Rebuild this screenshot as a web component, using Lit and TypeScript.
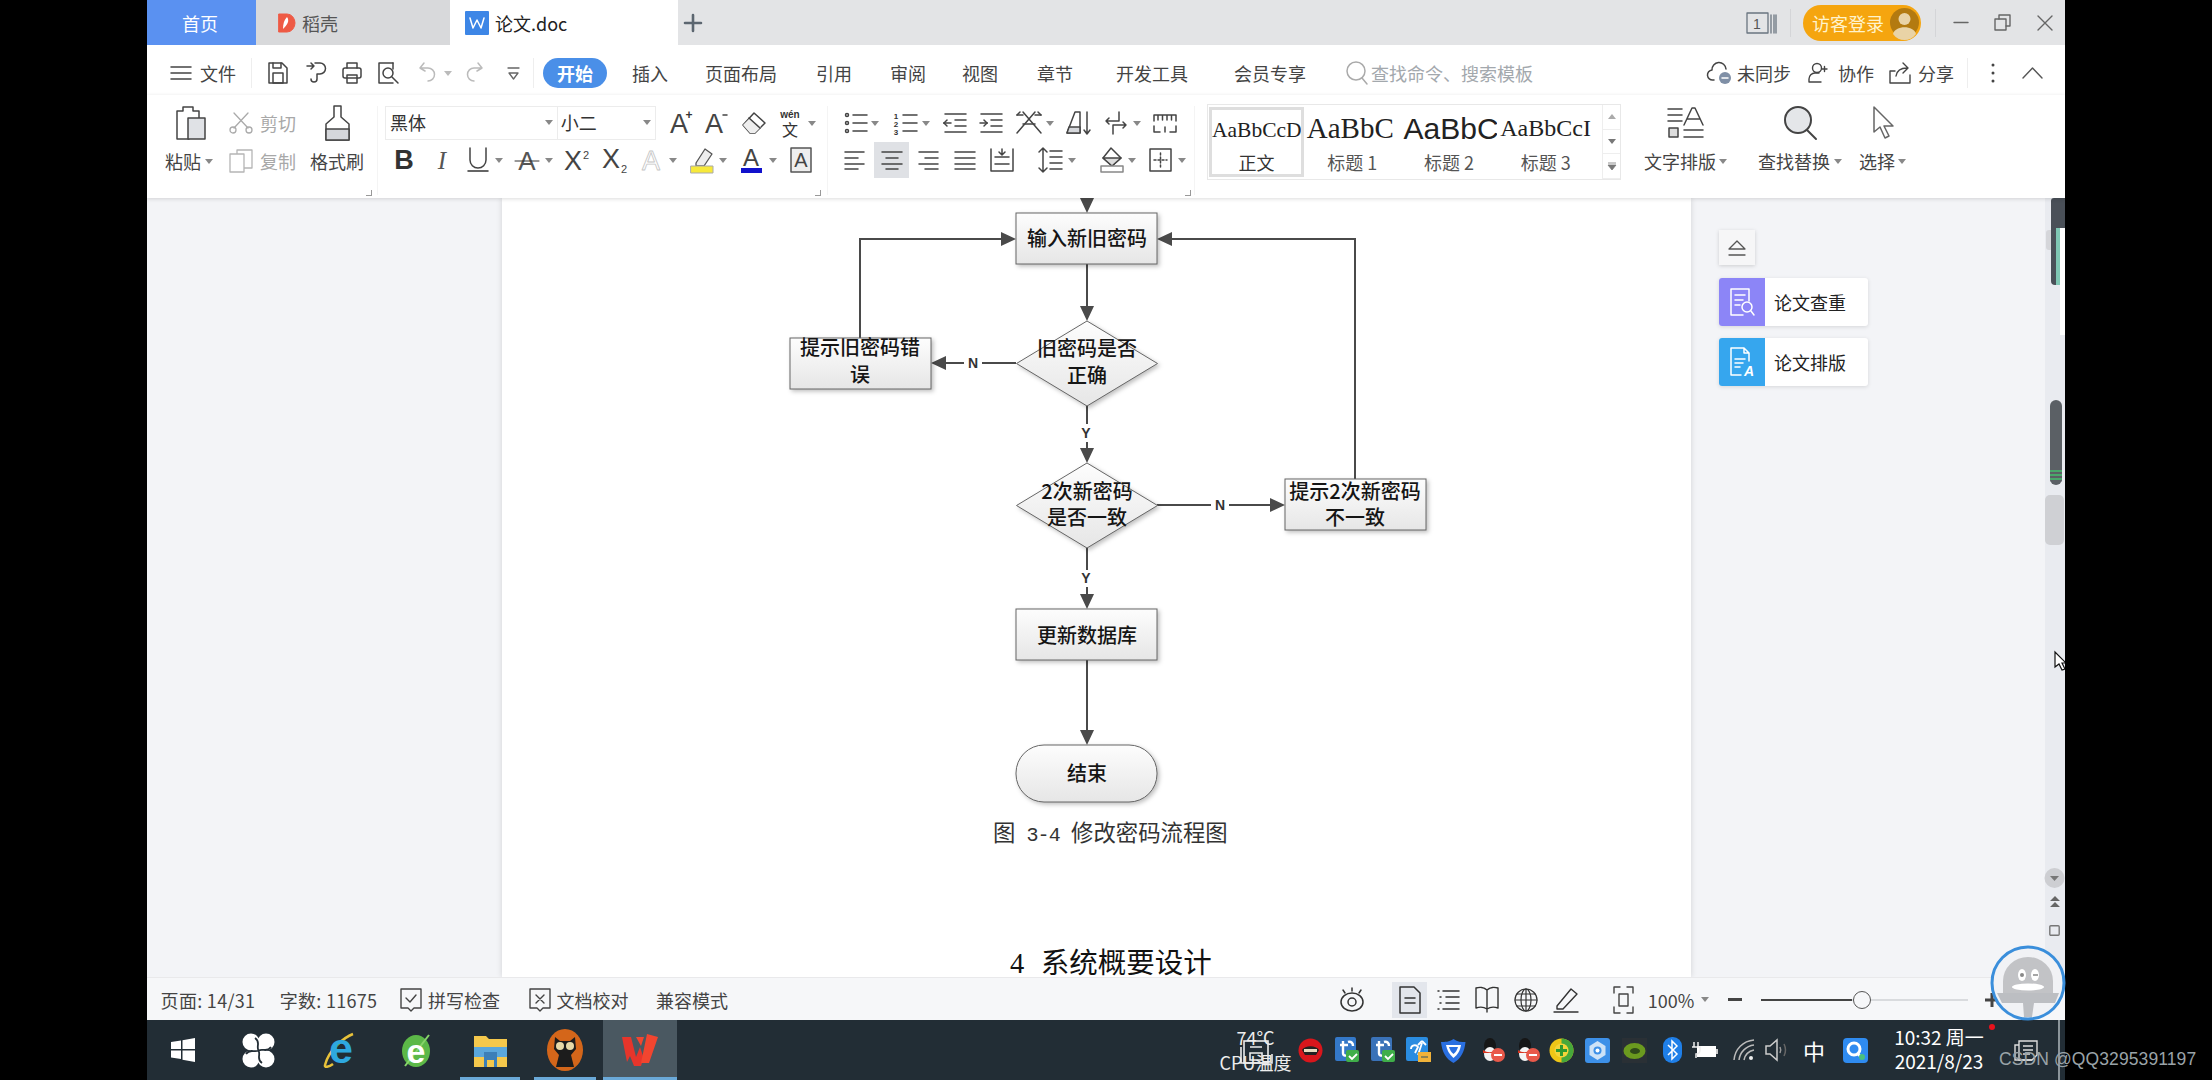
import { LitElement, html, css, svg } from "lit";
import { customElement } from "lit/decorators.js";

type Cell = [number, number, unknown, string?];
const strip = (origin: number, cells: Cell[]) => {
  let cur = origin;
  return cells.map(([x, w, c, cls]) => {
    const m = x - cur;
    cur = x + w;
    return html`<div class="cell ${cls || ""}" style="margin-left:${m}px;width:${w}px">${c}</div>`;
  });
};
const I = (w: number, h: number, b: unknown, sw = 1.5, col = "#444") =>
  html`<svg width=${w} height=${h} viewBox=${`0 0 ${w} ${h}`} fill="none" stroke=${col} stroke-width=${sw} stroke-linecap="round" stroke-linejoin="round">${b}</svg>`;
const T = (x: number, y: number, s: number, t: string, fill = "#444", anchor = "middle", w = 400, fam = "Liberation Sans") =>
  svg`<text x=${x} y=${y} font-size=${s} fill=${fill} stroke="none" text-anchor=${anchor} font-weight=${w} font-family=${fam}>${t}</text>`;
const caret = (x: number, col = "#888"): Cell => [x - 4, 8, html`<svg width="8" height="5" viewBox="0 0 8 5"><path d="M0 0h8L4 5z" fill=${col}></path></svg>`];
const lines3 = (a: number[][]) => a.map(([x1, y1, x2, y2]) => svg`<path d=${`M${x1} ${y1}L${x2} ${y2}`}></path>`);

/* ---- ribbon icons ---- */
const icPaste = I(31, 34, svg`<path d="M14 33H2V5h6V1h10v4h6v7"></path><rect x="13" y="12" width="17" height="21" fill="#e0e2e6"></rect>`);
const icCut = I(24, 22, svg`<path d="M5 1l14 15M19 1L5 16"></path><circle cx="4" cy="18" r="3"></circle><circle cx="20" cy="18" r="3"></circle>`, 1.3, "#aaa");
const icCopy = I(24, 24, svg`<rect x="8" y="1" width="15" height="18"></rect><rect x="1" y="5" width="14" height="18" fill="#fff"></rect>`, 1.3, "#b5b5b5");
const icBrush = I(27, 36, svg`<path d="M10 1h7v11l8 7v16H2V19l8-7z"></path><path d="M2 24h23v11H2z" fill="#d5d7db"></path>`);
const icAp = I(24, 26, svg`${T(10, 23, 27, "A")}${T(20, 9, 12, "+", "#333", "middle", 700)}`);
const icAm = I(24, 26, svg`${T(10, 23, 27, "A")}<path d="M19 5h4"></path>`);
const icEraser = I(26, 24, svg`<path d="M13 2l11 10-10 10H9L2 14z"></path><path d="M2 14l7-7 11 9-6 6H9z" fill="#eee" stroke="none"></path><path d="M8 7l11 10"></path>`);
const icWen = I(24, 28, svg`${T(12, 9, 10, "wén", "#333", "middle", 700)}${T(12, 27, 16, "文", "#333", "middle", 400, "Noto Sans CJK SC")}`);
const icBold = I(20, 26, T(10, 22, 27, "B", "#333", "middle", 700));
const icItal = I(14, 26, svg`<text x="7" y="22" font-size="25" font-style="italic" fill="#555" stroke="none" text-anchor="middle" font-family="Liberation Serif">I</text>`);
const icU = I(22, 28, svg`<path d="M3 2v12a8 8 0 0 0 16 0V2"></path><path d="M1 25h20" stroke="#333"></path>`);
const icStrike = I(24, 26, svg`${T(12, 23, 26, "A", "#555")}<path d="M0 14h24" stroke="#333" stroke-width="1"></path>`);
const icSup = I(26, 26, svg`${T(9, 23, 27, "X")}${T(22, 12, 11, "2")}`);
const icSub = I(26, 26, svg`${T(9, 21, 27, "X")}${T(22, 26, 11, "2")}`);
const icAGhost = I(21, 26, svg`<text x="10" y="23" font-size="27" fill="#fff" stroke="#c6c6c6" stroke-width=".8" text-anchor="middle" font-family="Liberation Sans">A</text>`);
const icHi = I(24, 28, svg`<path d="M6 17L15 3l7 5-8 12H6z" fill="#eee"></path><rect x="1" y="20" width="22" height="7" fill="#f7e93a" stroke="#aaa" stroke-width="1"></rect>`, 1.3, "#555");
const icABlue = I(21, 28, svg`${T(10, 20, 24, "A", "#444")}<rect x="0" y="22" width="21" height="5" fill="#1111cc" stroke="none"></rect>`);
const icABox = I(22, 26, svg`<rect x="1" y="1" width="20" height="24" fill="#eee" stroke="#555"></rect>${T(11, 20, 20, "A")}`);

const icBul = I(24, 24, svg`<circle cx="3" cy="4" r="1.5"></circle><circle cx="3" cy="12" r="1.5"></circle><circle cx="3" cy="20" r="1.5"></circle>${lines3([[9, 4, 23, 4], [9, 12, 23, 12], [9, 20, 23, 20]])}`);
const icNum = I(24, 24, svg`${T(3, 8, 8, "1", "#333", "middle", 700)}${T(3, 16, 8, "2", "#333", "middle", 700)}${T(3, 24, 8, "3", "#333", "middle", 700)}${lines3([[10, 4, 24, 4], [10, 12, 24, 12], [10, 20, 24, 20]])}`);
const icOut = I(24, 22, svg`${lines3([[2, 2, 23, 2], [12, 8, 23, 8], [12, 14, 23, 14], [2, 20, 23, 20], [1, 11, 8, 11], [1, 11, 4, 8], [1, 11, 4, 14]])}`);
const icIn = I(25, 22, svg`${lines3([[2, 2, 23, 2], [12, 8, 23, 8], [12, 14, 23, 14], [2, 20, 23, 20], [1, 11, 8, 11], [8, 11, 5, 8], [8, 11, 5, 14]])}`);
const icCross = I(26, 24, svg`${lines3([[1, 22, 19, 1], [25, 22, 7, 1], [7, 13, 19, 13], [1, 4, 7, 4], [1, 4, 4, 1], [19, 4, 25, 4], [25, 4, 22, 1]])}`);
const icSort = I(25, 26, svg`<path d="M1 23L9 2h5v21z" fill="#fff"></path><path d="M3 17h11v6H1z" fill="#d5d7db"></path><path d="M21 2v22M18 20l3 4 3-4"></path>`);
const icPara = I(24, 24, svg`<path d="M15 1v9H2M2 10l3-3M2 10l3 3M9 23v-9h13M22 14l-3-3M22 14l-3 3"></path>`);
const icRuler = I(24, 22, svg`<path d="M1 9V3h22v6M5 3v5M9.500 3v5M14 3v5M18.500 3v5M1 14v6h6M23 14v6h-6M12 15v5"></path>`);
const alignL = I(21, 20, lines3([[1, 2, 20, 2], [1, 8, 14, 8], [1, 14, 20, 14], [1, 19, 14, 19]]));
const alignC = I(22, 20, lines3([[1, 2, 21, 2], [5, 8, 17, 8], [1, 14, 21, 14], [5, 19, 17, 19]]));
const alignR = I(21, 20, lines3([[1, 2, 20, 2], [7, 8, 20, 8], [1, 14, 20, 14], [7, 19, 20, 19]]));
const alignJ = I(22, 20, lines3([[1, 2, 21, 2], [1, 8, 21, 8], [1, 14, 21, 14], [1, 19, 21, 19]]));
const alignD = I(24, 24, svg`<path d="M1 1v22M23 1v22M1 23h22M5 9h14M5 16h14M12 1v5M9 4l3 3 3-3"></path>`);
const icLine = I(24, 26, svg`<path d="M5 1v24M1 5l4-4 4 4M1 21l4 4 4-4M12 4h12M12 10h12M12 16h12M12 22h12"></path>`);
const icShade = I(24, 26, svg`<path d="M11 1l10 10-9 8-9-8z" fill="#fff"></path><path d="M3 11h18l-9 8z" fill="#ddd"></path><rect x="1" y="19" width="22" height="6" fill="#fff" stroke="#888"></rect>`);
const icBorder = I(23, 24, svg`<rect x="1" y="1" width="21" height="22"></rect><path d="M11.500 5v14M5 12h13" stroke-dasharray="2 2"></path>`);

const icType = I(36, 32, svg`${lines3([[0, 2, 14, 2], [0, 8, 14, 8], [0, 14, 14, 14], [16, 23, 35, 23], [16, 30, 35, 30]])}<rect x="1" y="21" width="9" height="9" fill="#ddd"></rect><path d="M16 18L24 1h3l8 17M19 12h13"></path>`);
const icFind = I(33, 34, svg`<circle cx="14" cy="14" r="13" fill="#e4e6e9"></circle><path d="M23 24l9 9"></path>`, 2);
const icSel = I(23, 34, svg`<path d="M2 1v25l6-5 5 11 4-2-5-10h9z" fill="#fff"></path>`, 1.5, "#666");

/* ---- menu icons ---- */
const icHam = I(20, 14, lines3([[0, 1, 20, 1], [0, 7, 20, 7], [0, 13, 20, 13]]));
const icSave = I(20, 22, svg`<path d="M1 1h13l5 5v15H1z"></path><path d="M5 11h10v10H5zM5 1v5h8V1"></path>`);
const icPath = I(20, 24, svg`<path d="M1 5h7M5 2l3 3-3 3"></path><path d="M9 2h5a5 5 0 0 1 0 11h-3v5a3 3 0 1 1-6 0"></path>`);
const icPrint = I(20, 22, svg`<rect x="1" y="6" width="18" height="10" rx="2"></rect><path d="M5 6V1h10v5M5 13h10v8H5z"></path>`);
const icPrev = I(22, 22, svg`<path d="M15 1H1v20h14"></path><path d="M15 1v6"></path><circle cx="10" cy="11" r="5"></circle><path d="M14 15l6 6"></path>`);
const icUndo = I(18, 22, svg`<path d="M6 1L2 6l5 3M2 6h8a6 6 0 0 1 0 13"></path>`, 1.5, "#bbb");
const icRedo = I(18, 22, svg`<path d="M12 1l4 5-5 3M16 6H8a6 6 0 0 0 0 13"></path>`, 1.5, "#bbb");
const icMore = I(13, 14, svg`<path d="M1 2h11M2 7l4.500 6L11 7z"></path>`, 1.3, "#666");
const icSearch = I(22, 24, svg`<circle cx="10" cy="10" r="9"></circle><path d="M16 17l5 6"></path>`, 1.5, "#aaa");
const icCloud = I(24, 24, svg`<path d="M7 19H6a5 5 0 0 1-1-10 7 7 0 0 1 14-1"></path><circle cx="18" cy="17" r="6" fill="#7f8fa6" stroke="none"></circle><path d="M15 17h6" stroke="#fff"></path>`);
const icColl = I(20, 22, svg`<circle cx="9" cy="6" r="4.500"></circle><path d="M1 20v-3a6 6 0 0 1 6-6h4M1 20h12M14 7h5M16.500 4.500v5"></path>`, 1.4);
const icShare = I(22, 22, svg`<path d="M6 9H1v12h20V13M7 14c1-6 5-8 11-8M14 1l5 5-5 5"></path>`, 1.4);
const icDots = I(4, 22, svg`<circle cx="2" cy="3" r="1.500" fill="#444"></circle><circle cx="2" cy="11" r="1.500" fill="#444"></circle><circle cx="2" cy="19" r="1.500" fill="#444"></circle>`, 0);
const icUp = I(21, 12, svg`<path d="M1 11L10.500 1 20 11"></path>`, 1.4, "#555");

/* ---- titlebar icons ---- */
const icLogo = I(18, 20, svg`<path d="M1 1h8a8 9 0 0 1 0 18H1z" fill="#ee5a45" stroke="#ee5a45"></path><path d="M9 4c3 4 0 8-4 12 0-5 1-9 4-12z" fill="#fff" stroke="none"></path>`, 1);
const icDoc = I(24, 24, svg`<rect x="0" y="0" width="24" height="24" rx="1" fill="#3d86e6" stroke="none"></rect><path d="M5 7l3 10 4-8 4 8 3-10" stroke="#fff"></path>`);
const icPlus = I(18, 18, svg`<path d="M9 1v16M1 9h16"></path>`, 2.6, "#5c6670");
const icWin1 = I(31, 22, svg`<rect x="1" y="1" width="21" height="20"></rect><path d="M25 3v18M28 3v18M30 3v18"></path>${T(11, 17, 14, "1", "#555")}`, 1.3, "#6a7480");
const icAva = html`<svg width="29" height="29" viewBox="0 0 29 29"><circle cx="14.500" cy="14.500" r="14.500" fill="#b37a10"></circle><circle cx="14.500" cy="11" r="6" fill="#e9d3a6"></circle><path d="M3 26c2-9 21-9 23 0a14 14 0 0 1-23 0z" fill="#e9d3a6"></path></svg>`;
const icMin = I(16, 3, svg`<path d="M1 1.500h14"></path>`, 1.4, "#666");
const icRest = I(17, 17, svg`<rect x="1" y="5" width="11" height="11" fill="none"></rect><path d="M5 5V1h11v11h-4"></path>`, 1.4, "#666");
const icClose = I(16, 16, svg`<path d="M1 1l14 14M15 1L1 15"></path>`, 1.4, "#666");

/* ---- side panel ---- */
const icEject = I(18, 18, svg`<path d="M9 2L1 10h16z"></path><path d="M1 16h16"></path>`, 1.3, "#555");
const icChk = I(26, 28, svg`<path d="M20 13V1H2v26h12M6 7h10M6 12h8M6 17h5"></path><circle cx="18" cy="19" r="5"></circle><path d="M22 23l3 4"></path>`, 1.5, "#fff");
const icFmt = I(26, 30, svg`<path d="M15 1H2v27h10M15 1l5 5v8M15 1v5h5M6 12h10M6 16h8M6 20h5"></path>${T(20, 29, 14, "A", "#fff", "middle", 700)}`, 1.5, "#fff");

/* ---- status bar ---- */
const icSpell = I(22, 24, svg`<path d="M1 1h20v19h-7l-3 3-3-3H1z"></path><path d="M6 10l4 4 6-7"></path>`, 1.4);
const icProof = I(22, 24, svg`<path d="M1 1h20v19h-7l-3 3-3-3H1z"></path><path d="M7 7l8 8M15 7l-8 8"></path>`, 1.4);
const icEye = I(24, 26, svg`<ellipse cx="12" cy="15" rx="11" ry="9"></ellipse><circle cx="12" cy="15" r="4"></circle><path d="M12 1v3M3 3l2 3M21 3l-2 3"></path>`, 1.5, "#333");
const icPageV = I(22, 28, svg`<path d="M1 1h14l6 6v20H1z"></path><path d="M6 12h10M6 17h10"></path>`, 1.5, "#333");
const icOutline = I(23, 24, svg`${lines3([[6, 3, 22, 3], [9, 9, 22, 9], [9, 15, 22, 15], [6, 21, 22, 21]])}<path d="M1 3h1M3 9h1M3 15h1M1 21h1"></path>`, 1.5, "#333");
const icBook = I(24, 28, svg`<path d="M12 4C9 1 4 1 1 2v20c3-1 8-1 11 1 3-2 8-2 11-1V2c-3-1-8-1-11 2zM12 4v22"></path>`, 1.4, "#333");
const icGlobe = I(24, 24, svg`<circle cx="12" cy="12" r="11"></circle><ellipse cx="12" cy="12" rx="5" ry="11"></ellipse><path d="M1 12h22M3 6h18M3 18h18M12 1v22"></path>`, 1.2, "#333");
const icPen = I(26, 26, svg`<path d="M4 19L18 2l6 5-14 15H4z"></path><path d="M1 25h24"></path>`, 1.4, "#333");
const icFull = I(21, 28, svg`<path d="M1 7V1h6M14 1h6v6M20 21v6h-6M7 27H1v-6"></path><rect x="6" y="8" width="9" height="12"></rect>`, 1.4, "#444");

/* ---- taskbar ---- */
const tbWin = html`<svg width="24" height="24" viewBox="0 0 24 24" fill="#fff"><path d="M0 4l10-1.500V11H0zM11.500 2.300L24 0v11H11.500zM0 12.500h10V21L0 19.500zM11.500 12.500H24V24l-12.500-2.200z"></path></svg>`;
const tbSwirl = html`<svg width="33" height="35" viewBox="0 0 33 35"><circle cx="9" cy="9" r="8.500" fill="#fff"></circle><circle cx="24" cy="9" r="8.500" fill="#fff"></circle><circle cx="9" cy="26" r="8.500" fill="#fff"></circle><circle cx="24" cy="26" r="8.500" fill="#fff"></circle><rect x="8" y="8" width="17" height="19" fill="#fff"></rect><path d="M16.500 17.500C14 13 19 9 13 5M16.500 17.500C19 22 14 26 20 30M16.500 17.500C21 15 25 20 29 14M16.500 17.500C12 20 8 15 4 21" fill="none" stroke="#222d35" stroke-width="1.800"></path></svg>`;
const tbIE = html`<svg width="34" height="36" viewBox="0 0 34 36"><path d="M30 2C22 5 6 17 2 33c-1 3 4 2 8-1" fill="none" stroke="#e8c23a" stroke-width="2.500"></path><text x="18" y="31" font-size="43" font-weight="700" fill="#2ea8e0" text-anchor="middle" font-family="Liberation Sans">e</text></svg>`;
const tbGe = html`<svg width="34" height="36" viewBox="0 0 34 36"><ellipse cx="17" cy="19" rx="14" ry="16" fill="#5cb848"></ellipse><path d="M30 3L6 34" stroke="#87d46a" stroke-width="2"></path><text x="17" y="31" font-size="34" font-weight="700" fill="#fff" text-anchor="middle" font-family="Liberation Sans">e</text></svg>`;
const tbFolder = html`<svg width="33" height="34" viewBox="0 0 33 34"><path d="M0 3h12l3 3h18v28H0z" fill="#f5c84c"></path><rect x="0" y="14" width="33" height="10" fill="#5ba7dc"></rect><rect x="10" y="19" width="13" height="15" fill="#3c7fb8"></rect><rect x="13" y="27" width="7" height="7" fill="#f5c84c"></rect></svg>`;
const tbCat = html`<svg width="36" height="42" viewBox="0 0 36 42"><ellipse cx="18" cy="21" rx="18" ry="21" fill="#d4661a"></ellipse><path d="M8 8l5 4h10l5-4 1 12-5 6 3 12H9l3-12-5-6z" fill="#1c1c1c"></path><circle cx="13" cy="17" r="4" fill="#e6d9a8"></circle><circle cx="23" cy="17" r="4" fill="#e6d9a8"></circle></svg>`;
const tbWps = html`<svg width="36" height="32" viewBox="0 0 36 32"><path d="M0 3h9l5 20 4-10 3 9 4-9-6 19h-7L8 22 5 28z" fill="#e7352b"></path><path d="M14 3h8l-3 9zM25 0l11 3-9 26h-8z" fill="#f2452f"></path></svg>`;
const tbCalc = html`<svg width="34" height="24" viewBox="0 0 34 24" fill="none" stroke="#eee" stroke-width="1.600"><rect x="4" y="1" width="24" height="22"></rect><path d="M1 7v16h31V14M10 7h12M10 13h12v7H10z"></path></svg>`;
const trMask = html`<svg width="25" height="25" viewBox="0 0 25 25"><circle cx="12.500" cy="12.500" r="12" fill="#d9161c"></circle><path d="M4 12c3-5 14-5 17 0l-3 5H7z" fill="#222"></path><path d="M6 11h13v3H6z" fill="#eadcc0"></path></svg>`;
const trT = (badge: string, col = "#3478c8") => html`<svg width="25" height="26" viewBox="0 0 25 26"><rect x="0" y="0" width="21" height="24" rx="2" fill=${col}></rect><path d="M5 8h8M8 4v12c0 3 3 3 5 2M13 5c3-1 5 1 5 4" stroke="#fff" stroke-width="2.400" fill="none"></path><rect x="11" y="13" width="13" height="12" rx="2" fill=${badge}></rect><path d="M14 19l3 3 5-5" stroke="#fff" stroke-width="1.800" fill="none"></path></svg>`;
const trT2 = html`<svg width="25" height="26" viewBox="0 0 25 26"><rect x="0" y="0" width="22" height="24" rx="2" fill="#2a8ce0"></rect><path d="M5 12c0-4 5-5 7-2l-3 6M12 18l4-12M16 4l4 4M16 4l-4 4" stroke="#fff" stroke-width="1.800" fill="none"></path><rect x="12" y="15" width="13" height="10" fill="#f0b23a"></rect><path d="M15 20h7" stroke="#775" stroke-width="1.600"></path></svg>`;
const trShield = html`<svg width="25" height="25" viewBox="0 0 25 25"><path d="M12.500 1c4 3 8 3 12 3-1 10-5 17-12 21C5 21 1 14 0 4c4 0 8 0 12.500-3z" fill="#2a6fe0"></path><path d="M5 7h15c-1 6-3 9-7.500 13C8 16 6 12 5 7z" fill="#fff"></path><path d="M8 9h9c-1 3-2 5-4.500 7C10 14 9 12 8 9z" fill="#2a6fe0"></path></svg>`;
const trQQ = html`<svg width="24" height="26" viewBox="0 0 24 26"><ellipse cx="9" cy="9" rx="6" ry="8" fill="#161616"></ellipse><ellipse cx="9" cy="17" rx="6" ry="7" fill="#f4f4f4"></ellipse><path d="M2 13c4 3 9 3 13 0v3H2z" fill="#d8341f"></path><circle cx="17" cy="18" r="7" fill="#e9594a"></circle><path d="M13 18h8" stroke="#fff" stroke-width="2"></path></svg>`;
const trPlus = html`<svg width="25" height="25" viewBox="0 0 25 25"><circle cx="12.500" cy="12.500" r="12" fill="#efc617"></circle><path d="M12.500 .5a12 12 0 0 1 0 24z" fill="#46a83a"></path><circle cx="12.500" cy="12.500" r="7" fill="#f4d43a"></circle><path d="M12.500 7v11M7 12.500h11" stroke="#2e9a2e" stroke-width="3"></path></svg>`;
const trGear = html`<svg width="25" height="25" viewBox="0 0 25 25"><rect width="25" height="25" rx="3" fill="#3d90e8"></rect><path d="M12.500 3l8 5v9l-8 5-8-5V8z" fill="#cde2f7"></path><circle cx="12.500" cy="12.500" r="4" fill="#3d90e8"></circle><circle cx="12.500" cy="12.500" r="2" fill="#fff"></circle></svg>`;
const trNv = html`<svg width="25" height="25" viewBox="0 0 25 25"><rect width="25" height="25" fill="#2a3035"></rect><ellipse cx="12.500" cy="13" rx="11" ry="8" fill="#6b9a1f"></ellipse><ellipse cx="13" cy="13" rx="5" ry="3" fill="#2f4a1a"></ellipse></svg>`;
const trBt = html`<svg width="19" height="26" viewBox="0 0 19 26"><rect width="19" height="26" rx="9" fill="#1f7fe8"></rect><path d="M5 8l9 9-5 5V4l5 5-9 9" stroke="#fff" stroke-width="1.500" fill="none"></path></svg>`;
const trBat = html`<svg width="26" height="20" viewBox="0 0 26 20"><rect x="5" y="6" width="19" height="11" fill="#fff"></rect><rect x="24" y="9" width="2" height="5" fill="#ccc"></rect><path d="M2 2v5M6 2v5M0 7h8v3c0 3-2 4-4 4v4" stroke="#eee" stroke-width="1.500" fill="none"></path></svg>`;
const trWifi = html`<svg width="22" height="22" viewBox="0 0 22 22" fill="none" stroke="#bbb" stroke-width="1.500"><path d="M1 21C2 10 10 2 21 1M6 21C7 13 13 7 21 6M11 21c1-5 5-9 10-10"></path><circle cx="18" cy="19" r="2" fill="#eee" stroke="none"></circle></svg>`;
const trVol = html`<svg width="24" height="24" viewBox="0 0 24 24" fill="none" stroke="#ccc" stroke-width="1.500"><path d="M1 8h4l7-6v20l-7-6H1z"></path><path d="M15 9c1 2 1 4 0 6" stroke="#999"></path><path d="M19 6c2 4 2 8 0 12" stroke="#666"></path></svg>`;
const trQ = html`<svg width="25" height="25" viewBox="0 0 25 25"><rect width="25" height="25" rx="4" fill="#2f8bf0"></rect><circle cx="11" cy="11" r="6" fill="none" stroke="#fff" stroke-width="3"></circle><path d="M14 15l4 4" stroke="#fff" stroke-width="2.500"></path><circle cx="19" cy="19" r="3" fill="#4ac07c"></circle></svg>`;
const trNote = html`<svg width="24" height="22" viewBox="0 0 24 22" fill="none" stroke="#ddd" stroke-width="1.400"><path d="M5 2h18v14l-5 5H5zM9 7h10M9 11h10M9 15h7"></path><path d="M5 6H1v15h17"></path></svg>`;

const tray: [number, unknown][] = [
  [1298, trMask], [1335, trT("#3fae49")], [1371, trT("#3fae49", "#3a72b8")], [1406, trT2], [1441, trShield],
  [1480, trQQ], [1515, trQQ], [1549, trPlus], [1585, trGear], [1622, trNv], [1660, trBt], [1692, trBat],
  [1731, trWifi], [1764, trVol],
];

@customElement("flow-figure")
class FlowFigure extends LitElement {
  static styles = css`
    :host { display: block; }
    svg { display: block; }
    .shape { filter: drop-shadow(2px 2px 2px rgba(0, 0, 0, 0.25)); }
    text { font-family: "Noto Sans CJK SC", sans-serif; font-size: 20px; font-weight: 500; fill: #151515; text-anchor: middle; }
    .yn { font-family: "Liberation Sans", sans-serif; font-size: 14px; font-weight: 700; fill: #333; }
    .ln { stroke: #4a4a4a; stroke-width: 2; fill: none; }
    .hd { fill: #4a4a4a; }
  `;
  render() {
    const box = (x: number, y: number, w: number, h: number, rx = 0) =>
      svg`<rect class="shape" x=${x} y=${y} width=${w} height=${h} rx=${rx} fill="url(#g)" stroke="#666" stroke-width="1"></rect>`;
    const dia = (cx: number, cy: number) =>
      svg`<path class="shape" d=${`M${cx} ${cy - 42.5}L${cx + 70.5} ${cy}L${cx} ${cy + 42.5}L${cx - 70.5} ${cy}Z`} fill="url(#g)" stroke="#666" stroke-width="1"></path>`;
    const down = (x: number, y: number) => svg`<path class="hd" d=${`M${x - 7} ${y - 15}h14L${x} ${y}z`}></path>`;
    const right = (x: number, y: number) => svg`<path class="hd" d=${`M${x - 15} ${y - 7}v14L${x} ${y}z`}></path>`;
    const left = (x: number, y: number) => svg`<path class="hd" d=${`M${x + 15} ${y - 7}v14L${x} ${y}z`}></path>`;
    return html`<svg width="1190" height="620" viewBox="502 198 1190 620">
      <defs><linearGradient id="g" x1="0" y1="0" x2="0" y2="1"><stop offset="0" stop-color="#fdfdfd"></stop><stop offset="1" stop-color="#e6e6e6"></stop></linearGradient></defs>
      <path class="ln" d="M1087 198v10"></path>${down(1087, 213)}
      <path class="ln" d="M1087 264v45"></path>${down(1087, 321)}
      <path class="ln" d="M860 338V239h145"></path>${right(1016, 239)}
      <path class="ln" d="M1355 479V239H1170"></path>${left(1157, 239)}
      <path class="ln" d="M1016 363H945"></path>${left(931, 363)}
      <path class="ln" d="M1087 406v18M1087 442v10"></path>${down(1087, 463)}
      <path class="ln" d="M1157 505H1272"></path>${right(1285, 505)}
      <path class="ln" d="M1087 548v22M1087 587v10"></path>${down(1087, 609)}
      <path class="ln" d="M1087 660v72"></path>${down(1087, 745)}
      ${box(1016, 213, 141, 51)}${box(790, 338, 141, 51)}${box(1285, 479, 141, 51)}${box(1016, 609, 141, 51)}${box(1016, 745, 141, 57, 28)}
      ${dia(1087, 363.5)}${dia(1087, 505.5)}
      <text x="1087" y="246">输入新旧密码</text>
      <text x="860" y="355">提示旧密码错</text><text x="860" y="382">误</text>
      <text x="1087" y="356">旧密码是否</text><text x="1087" y="383">正确</text>
      <text x="1087" y="499">2次新密码</text><text x="1087" y="525">是否一致</text>
      <text x="1355" y="499">提示2次新密码</text><text x="1355" y="525">不一致</text>
      <text x="1087" y="643">更新数据库</text>
      <text x="1087" y="781">结束</text>
      <rect x="964" y="355" width="18" height="16" fill="#fff"></rect><text class="yn" x="973" y="368">N</text>
      <rect x="1211" y="497" width="18" height="16" fill="#fff"></rect><text class="yn" x="1220" y="510">N</text>
      <text class="yn" x="1086" y="438">Y</text><text class="yn" x="1086" y="583">Y</text>
    </svg>`;
  }
}

@customElement("app-root")
class AppRoot extends LitElement {
  static styles = css`
    :host { display: block; width: 2212px; height: 1080px; background: #000; position: relative; overflow: hidden;
      font-family: "Noto Sans CJK SC", "Liberation Sans", sans-serif; font-size: 18px; color: #444; }
    * { box-sizing: border-box; }
    svg { display: block; flex: none; overflow: visible; }
    .app { margin-left: 147px; width: 1918px; height: 1080px; display: flex; flex-direction: column; }
    .row { display: flex; align-items: center; }
    .cell { display: flex; align-items: center; justify-content: center; flex: none; white-space: nowrap; line-height: 1; }

    .title { height: 45px; background: #e3e4e6; align-items: stretch; flex: none; }
    .tabhome { background: #5a91f1; color: #fff; padding-right: 3px; }
    .tabdao { background: #d8d9db; color: #555; justify-content: flex-start; padding-left: 22px; gap: 6px; }
    .tabdoc { background: #fff; color: #222; justify-content: flex-start; padding-left: 15px; gap: 6px; }
    .vcenter { align-self: center; }
    .sep { width: 1px; height: 28px; background: #d4d5d8; }
    .pill { background: #f5a50f; border-radius: 18px; height: 36px; color: #fff3cc; justify-content: space-between; padding: 0 2px 0 9px; }

    .menu { height: 50px; padding-top: 6px; background: #fff; flex: none; }
    .menu .cell { height: 44px; }
    .start { background: #4a8fe8; color: #fff; border-radius: 15px; height: 30px !important; font-weight: 700; }
    .msep { width: 1px; height: 30px !important; background: #eee; }
    .hint { color: #a3a8ad; justify-content: flex-start; }

    .ribbon { height: 103px; background: #fff; display: flex; padding-top: 11px; flex: none; position: relative; z-index: 2; box-shadow: 0 1px 4px rgba(0, 0, 0, 0.14); }
    .group { position: relative; flex: none; border-right: 1px solid #f4f4f4; height: 89px; }
    .r1 { height: 34px; margin-bottom: 2px; }
    .r2 { height: 36px; }
    .r2.lbl { margin-top: 3px; }
    .r1 .cell, .r2 .cell { height: 100%; }
    .corner { position: absolute; bottom: -1px; width: 6px; height: 6px; border-right: 1px solid #999; border-bottom: 1px solid #999; }
    .gray { color: #a8a8a8; }
    .active { background: #dfe1e5; }
    .sel { border: 1px solid #ececec; display: flex; height: 34px; width: 271px; align-items: center; color: #333; }
    .sel-a { width: 173px; padding: 0 4px 2px; display: flex; justify-content: space-between; align-items: center; height: 100%; border-right: 1px solid #ececec; }
    .sel-b { width: 98px; padding: 0 4px 2px 3px; display: flex; justify-content: space-between; align-items: center; }
    .gallery { margin: -2px 0 0 12px; width: 414px; height: 76px; border: 1px solid #e8e8e8; padding: 2px 0 0 1px; display: flex; }
    .gi { width: 97px; height: 70px; display: flex; flex-direction: column; align-items: center; overflow: hidden; color: #555; }
    .gi.on { width: 95px; border: 3px solid #dedede; color: #333; }
    .gs { height: 43px; width: 100%; display: flex; align-items: center; padding-left: 3px; overflow: hidden; white-space: nowrap; color: #222; line-height: 1; flex: none; }
    .gi.on .gs { height: 40px; padding-left: 0; }
    .gl { height: 24px; line-height: 24px; }
    .f20 { font: 21.500px "Liberation Serif", serif; }
    .f29 { font: 29px "Liberation Serif", serif; }
    .f28 { font: 30px "Liberation Sans", sans-serif; }
    .f24 { font: 24px "Liberation Serif", serif; }
    .gscroll { width: 18px; margin-left: 8px; display: flex; flex-direction: column; border-left: 1px solid #eee; margin-top: -2px; height: 74px; }
    .gscroll div { flex: 1; display: flex; align-items: center; justify-content: center; border-bottom: 1px solid #eee; }

    .doc { flex: 1; min-height: 0; display: flex; background: #f3f4f7; overflow: hidden; position: relative; }
    .page { margin-left: 355px; width: 1189px; background: #fff; flex: none; box-shadow: 0 0 6px rgba(0, 0, 0, 0.14); overflow: hidden; font-family: "Noto Sans CJK SC", sans-serif; }
    .caption { margin: -1px 0 0 491px; font-size: 22.4px; line-height: 28px; height: 28px; white-space: nowrap; color: #333; word-spacing: 6px; }
    .caption span { font-family: "Liberation Mono", monospace; font-size: 20px; letter-spacing: -0.8px; }
    .heading { margin: 96px 0 0 508px; font-size: 28.5px; line-height: 40px; white-space: nowrap; color: #111; word-spacing: 10px; }
    .heading span { font-family: "Liberation Serif", serif; }
    .side { padding: 32px 0 0 28px; display: flex; flex-direction: column; align-items: flex-start; }
    .coll { width: 36px; height: 35px; background: #f6f6f7; box-shadow: 0 1px 4px rgba(0, 0, 0, 0.16); display: flex; align-items: center; justify-content: center; margin-bottom: 13px; }
    .card { width: 149px; height: 48px; background: #fff; border-radius: 3px; overflow: hidden; display: flex; align-items: center; gap: 9px; margin-bottom: 12px; box-shadow: 0 1px 4px rgba(0, 0, 0, 0.12); color: #222; }
    .card i { width: 46px; height: 48px; display: flex; align-items: center; justify-content: center; }
    .c1 { background: #8c85f7; }
    .c2 { background: #36a6ee; }
    .track { position: absolute; right: 0; top: 0; bottom: 0; width: 20px; background: #e9ebf0; }
    .thumb-a { position: absolute; left: 6px; top: 0; width: 14px; height: 30px; background: #4a5058; border-radius: 3px 0 0 0; }
    .thumb-b { position: absolute; left: 6px; top: 30px; width: 9px; height: 57px; background: linear-gradient(90deg, #4a5058 50%, #7fc7b4 50%); border-radius: 0 0 0 4px; }
    .white { position: absolute; left: 15px; top: 30px; width: 5px; height: 107px; background: #fff; }
    .blob { position: absolute; left: 1px; top: 32px; width: 6px; height: 20px; background: #d5d6da; border-radius: 3px 0 0 3px; }
    .thumb-c { position: absolute; left: 5px; top: 202px; width: 12px; height: 85px; background: #5b6065; border-radius: 6px; overflow: hidden; }
    .thumb-c div { position: absolute; left: 0; right: 0; bottom: 3px; height: 12px; background: repeating-linear-gradient(180deg, #49a76a 0 2px, #5b6065 2px 4px); }
    .thumb-d { position: absolute; left: 0; top: 297px; width: 19px; height: 50px; background: #cfd0d4; border-radius: 5px; }
    .ctl { position: absolute; left: 0; width: 19px; display: flex; justify-content: center; }
    .cursor { position: absolute; left: 9px; top: 453px; }

    .status { height: 43px; background: #f6f7f9; border-top: 1px solid #e9e9eb; padding-top: 1px; flex: none; color: #444; }
    .status .cell { height: 38px; }
    .num { letter-spacing: 0.300px; }
    .onbg { background: #e3e6ec; height: 36px !important; }
    .slider { height: 2px; background: #d9dbde; position: relative; }
    .slider b { position: absolute; left: 0; top: 0; height: 2px; width: 91px; background: #444; }
    .knob { width: 18px; height: 18px; border: 1.5px solid #555; border-radius: 50%; background: #f6f7f9; position: absolute; left: 92px; top: -8px; }

    .task { height: 60px; background: #222d35; flex: none; align-items: stretch; color: #fff; position: relative; }
    .run { border-bottom: 3px solid #6aa9d8; padding-top: 3px; }
    .runon { background: #4a5861; }
    .stack { position: relative; flex-direction: column; font-size: 18px; line-height: 25px; color: #eee; justify-content: center; gap: 0; }
    .stack span { display: block; }
    .calc { position: absolute; left: 21px; top: 20px; }
    .clock { flex-direction: column; line-height: 24px; color: #fff; font-size: 19px; padding-bottom: 2px; }
    .zh { font-size: 22px; color: #fff; }
    .tline { width: 2px; background: #8b949a; }
    .wm { position: absolute; left: 1999px; top: 1049px; font: 17.500px "Liberation Sans", sans-serif; color: #9aa3a8; white-space: nowrap; letter-spacing: 0.100px; }
    .dot { position: absolute; left: 1989px; top: 1024px; width: 6px; height: 6px; border-radius: 50%; background: #e8121c; }
    .bot { position: absolute; left: 1990px; top: 945px; z-index: 3; }
  `;

  render() {
    return html`<div class="app">
      <div class="row title">${strip(147, [
        [147, 109, "首页", "tabhome"],
        [256, 194, html`${icLogo}<span>稻壳</span>`, "tabdao"],
        [450, 228, html`${icDoc}<span>论文.doc</span>`, "tabdoc"],
        [684, 18, icPlus],
        [1746, 31, icWin1],
        [1790, 1, "", "sep vcenter"],
        [1803, 118, html`<span>访客登录</span>${icAva}`, "pill vcenter"],
        [1935, 1, "", "sep vcenter"],
        [1953, 16, icMin],
        [1994, 17, icRest],
        [2037, 16, icClose],
      ])}</div>

      <div class="row menu">${strip(147, [
        [171, 20, icHam], [200, 36, "文件"], [251, 1, "", "msep"],
        [268, 20, icSave], [306, 20, icPath], [342, 20, icPrint], [378, 22, icPrev],
        [418, 18, icUndo], caret(448, "#bbb"), [466, 18, icRedo], [507, 13, icMore], [533, 1, "", "msep"],
        [543, 64, "开始", "start"],
        [632, 36, "插入"], [705, 72, "页面布局"], [816, 36, "引用"], [890, 36, "审阅"], [962, 36, "视图"], [1037, 36, "章节"],
        [1116, 72, "开发工具"], [1234, 72, "会员专享"],
        [1346, 22, icSearch], [1371, 162, "查找命令、搜索模板", "hint"],
        [1707, 24, icCloud], [1737, 54, "未同步"], [1808, 20, icColl], [1838, 36, "协作"], [1889, 22, icShare], [1918, 36, "分享"],
        [1967, 1, "", "msep"], [1991, 4, icDots], [2022, 21, icUp],
      ])}</div>

      <div class="ribbon">
        <div class="group" style="width:231px">
          <div class="row r1">${strip(147, [[175, 31, icPaste], [229, 24, icCut], [260, 36, "剪切", "gray"], [324, 27, icBrush]])}</div>
          <div class="row r2 lbl">${strip(147, [[165, 36, "粘贴"], caret(209), [229, 24, icCopy], [260, 36, "复制", "gray"], [310, 54, "格式刷"]])}</div>
          <span class="corner" style="right:5px"></span>
        </div>
        <div class="group" style="width:450px">
          <div class="row r1">${strip(378, [
            [385, 271, html`<div class="sel"><div class="sel-a"><span>黑体</span><svg width="8" height="5" viewBox="0 0 8 5"><path d="M0 0h8L4 5z" fill="#888"></path></svg></div><div class="sel-b"><span>小二</span><svg width="8" height="5" viewBox="0 0 8 5"><path d="M0 0h8L4 5z" fill="#888"></path></svg></div></div>`],
            [669, 24, icAp], [704, 24, icAm], [741, 26, icEraser], [778, 24, icWen], caret(812),
          ])}</div>
          <div class="row r2">${strip(378, [
            [394, 20, icBold], [435, 14, icItal], [467, 22, icU], caret(499), [515, 24, icStrike], caret(549),
            [564, 26, icSup], [602, 26, icSub], [641, 21, icAGhost], caret(673), [690, 24, icHi], caret(723),
            [741, 21, icABlue], caret(773), [790, 22, icABox],
          ])}</div>
          <span class="corner" style="right:6px"></span>
        </div>
        <div class="group" style="width:367px">
          <div class="row r1">${strip(828, [
            [844, 24, icBul], caret(875), [893, 24, icNum], caret(926), [943, 24, icOut], [979, 25, icIn],
            [1016, 26, icCross], caret(1050), [1066, 25, icSort], [1104, 24, icPara], caret(1137), [1153, 24, icRuler],
          ])}</div>
          <div class="row r2">${strip(828, [
            [844, 21, alignL], [874, 35, alignC, "active"], [918, 21, alignR], [954, 22, alignJ], [990, 24, alignD],
            [1038, 24, icLine], caret(1072), [1100, 24, icShade], caret(1132), [1149, 23, icBorder], caret(1182),
          ])}</div>
          <span class="corner" style="right:3px"></span>
        </div>
        <div class="group" style="width:445px;border:0">
          <div class="gallery">
            <div class="gi on"><div class="gs f20">AaBbCcDd</div><div class="gl">正文</div></div>
            <div class="gi"><div class="gs f29">AaBbC</div><div class="gl">标题 1</div></div>
            <div class="gi"><div class="gs f28">AaBbCc</div><div class="gl">标题 2</div></div>
            <div class="gi"><div class="gs f24">AaBbCcI</div><div class="gl">标题 3</div></div>
            <div class="gscroll">
              <div><svg width="8" height="5" viewBox="0 0 8 5"><path d="M0 5h8L4 0z" fill="#aaa"></path></svg></div>
              <div><svg width="8" height="5" viewBox="0 0 8 5"><path d="M0 0h8L4 5z" fill="#777"></path></svg></div>
              <div><svg width="8" height="8" viewBox="0 0 8 8"><path d="M0 1h8M0 3h8L4 8z" stroke="#777" fill="#777" stroke-width=".8"></path></svg></div>
            </div>
          </div>
        </div>
        <div class="group" style="width:278px;border:0">
          <div class="row r1">${strip(1640, [[1668, 36, icType], [1784, 33, icFind], [1872, 23, icSel]])}</div>
          <div class="row r2 lbl">${strip(1640, [[1644, 72, "文字排版"], caret(1723), [1758, 72, "查找替换"], caret(1838), [1859, 36, "选择"], caret(1902)])}</div>
        </div>
      </div>

      <div class="doc">
        <div class="page">
          <flow-figure></flow-figure>
          <div class="caption">图 <span>3-4</span> 修改密码流程图</div>
          <div class="heading"><span>4</span> 系统概要设计</div>
        </div>
        <div class="side">
          <div class="coll">${icEject}</div>
          <div class="card"><i class="c1">${icChk}</i><span>论文查重</span></div>
          <div class="card"><i class="c2">${icFmt}</i><span>论文排版</span></div>
        </div>
        <div class="track">
          <div class="white"></div><div class="blob"></div><div class="thumb-a"></div><div class="thumb-b"></div>
          <div class="thumb-c"><div></div></div><div class="thumb-d"></div>
          <div class="ctl" style="top:669px"><svg width="19" height="22" viewBox="0 0 19 22"><circle cx="9.500" cy="11" r="10" fill="#cdced2"></circle><path d="M5 9h9l-4.500 5z" fill="#777"></path></svg></div>
          <div class="ctl" style="top:698px"><svg width="12" height="12" viewBox="0 0 12 12"><path d="M1 5h10L6 0zM1 11h10L6 6z" fill="#666"></path></svg></div>
          <div class="ctl" style="top:727px"><svg width="11" height="11" viewBox="0 0 11 11"><rect x=".8" y=".8" width="9.400" height="9.400" rx="1" fill="none" stroke="#777" stroke-width="1.400"></rect></svg></div>
          <div class="cursor"><svg width="13" height="20" viewBox="0 0 13 20"><path d="M1 1v15l4-3 3 6 3-1-3-6h4z" fill="#fff" stroke="#111" stroke-width="1.200"></path></svg></div>
        </div>
      </div>

      <div class="row status">${strip(147, [
        [160, 96, "页面: 14/31", "num"], [279, 99, "字数: 11675", "num"], [400, 22, icSpell], [428, 72, "拼写检查"], [529, 22, icProof], [557, 71, "文档校对"], [656, 72, "兼容模式"],
        [1340, 24, icEye], [1392, 35, icPageV, "onbg"], [1437, 23, icOutline], [1475, 24, icBook], [1514, 24, icGlobe], [1553, 26, icPen],
        [1613, 21, icFull], [1647, 48, "100%"], caret(1705),
        [1728, 14, html`<svg width="14" height="3" viewBox="0 0 14 3"><rect width="14" height="3" fill="#444"></rect></svg>`],
        [1761, 207, html`<div class="slider" style="width:207px"><b></b><div class="knob"></div></div>`],
        [1985, 14, html`<svg width="14" height="14" viewBox="0 0 14 14"><path d="M0 5.500h14v3H0zM5.500 0h3v14h-3z" fill="#444"></path></svg>`],
      ])}</div>

      <div class="row task">${strip(147, [
        [171, 24, tbWin], [242, 33, tbSwirl], [323, 34, tbIE], [399, 34, tbGe],
        [460, 60, tbFolder, "run"], [534, 62, tbCat, "run"], [603, 74, tbWps, "run runon"],
        [1219, 73, html`<span>74°C</span><span>CPU温度</span><div class="calc">${tbCalc}</div>`, "stack"],
        ...tray.map(([x, c]): Cell => [x, 25, c]),
        [1803, 22, "中", "zh"],
        [1843, 25, trQ],
        [1894, 90, html`<span>10:32 周一</span><span>2021/8/23</span>`, "clock"],
        [2014, 24, trNote],
        [2058, 2, "", "tline"],
      ])}</div>
    </div>
    <div class="wm">CSDN @QQ3295391197</div>
    <div class="dot"></div>
    <div class="bot"><svg width="76" height="76" viewBox="0 0 76 76">
      <circle cx="38" cy="38" r="36" fill="#f1f2f5" stroke="#3a8edb" stroke-width="3"></circle>
      <path d="M13 48V36a25 24 0 0 1 50 0v12z" fill="#c2c3c6"></path>
      <path d="M7 48h62l-4 10H44l-2 14h-8l-1-14H12z" fill="#bcbec2"></path>
      <ellipse cx="32" cy="30" rx="4" ry="6" fill="#fff"></ellipse><ellipse cx="45" cy="30" rx="4" ry="6" fill="#fff"></ellipse>
      <circle cx="32" cy="30" r="2" fill="#888"></circle><path d="M43 30h5" stroke="#888" stroke-width="1.500"></path>
      <ellipse cx="38" cy="42" rx="16" ry="3.500" fill="#fff"></ellipse>
    </svg></div>`;
  }
}
